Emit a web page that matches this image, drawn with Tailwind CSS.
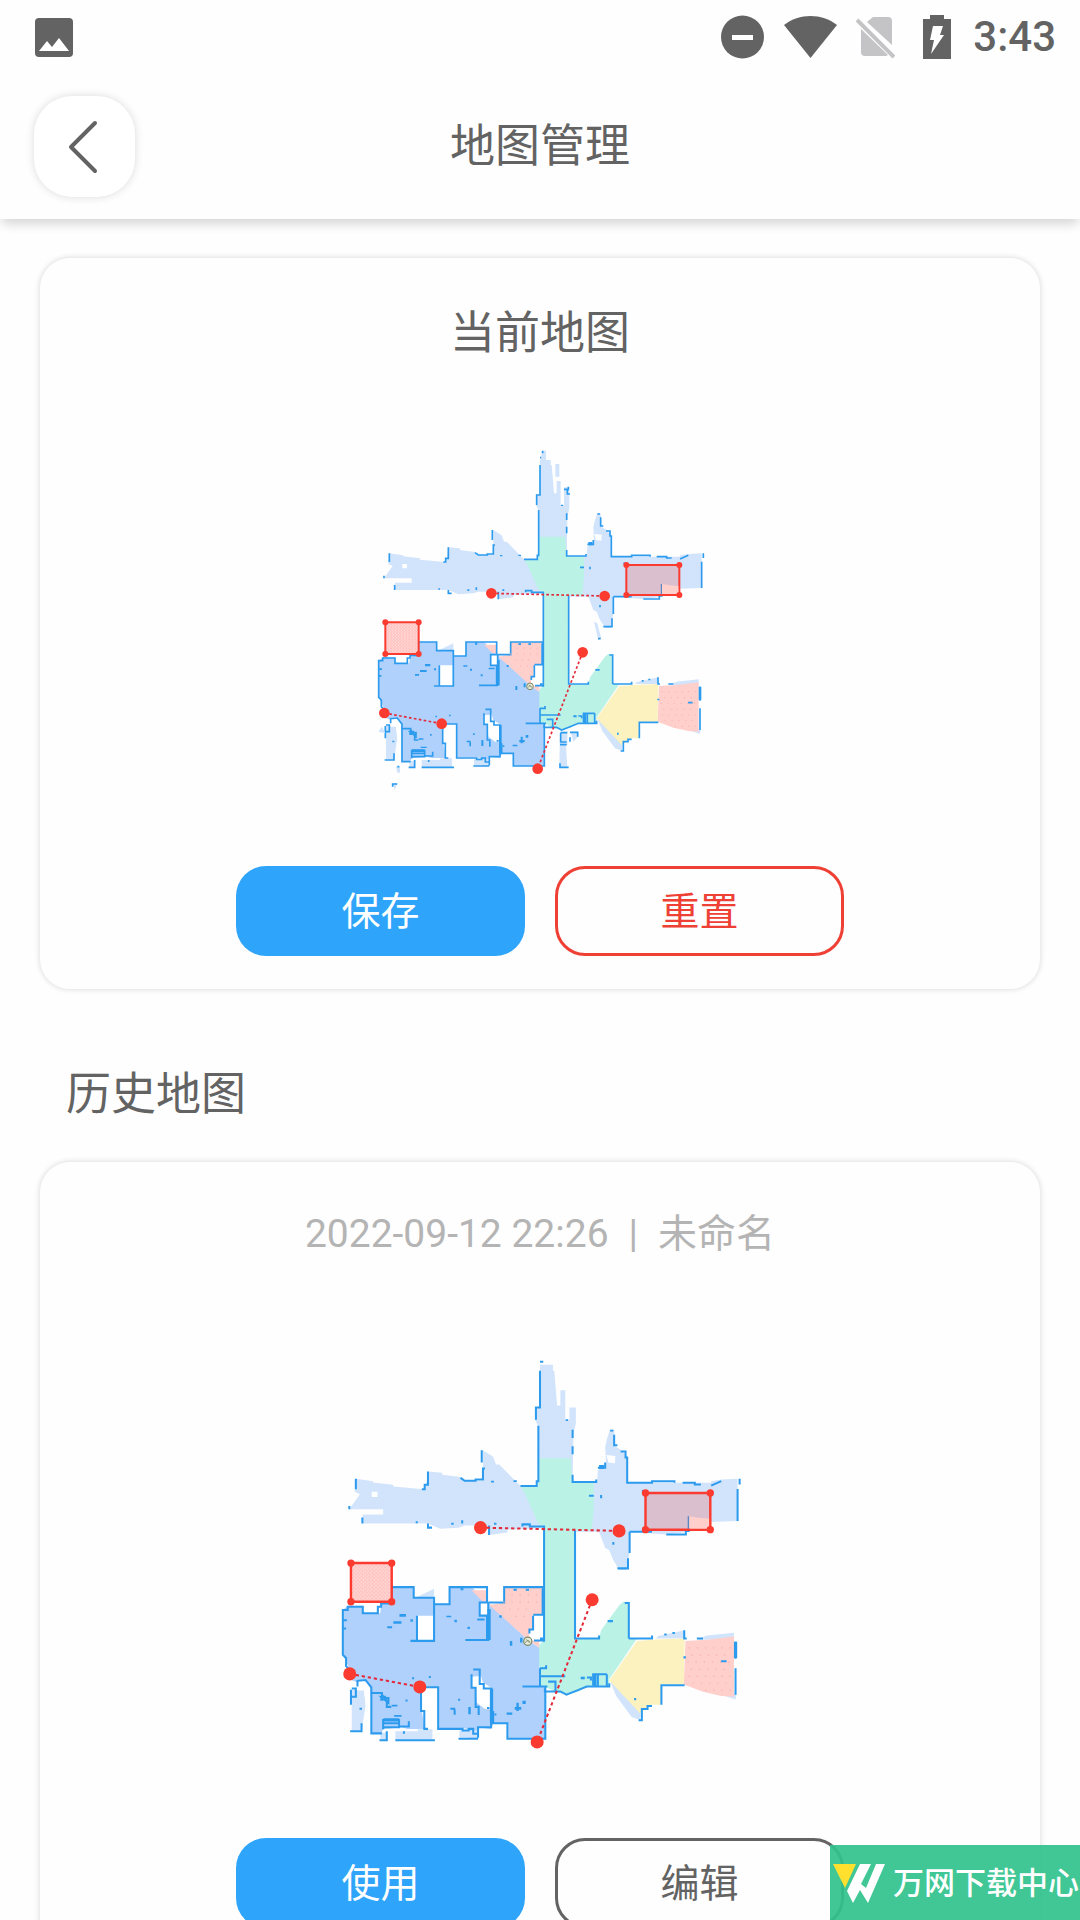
<!DOCTYPE html>
<html lang="zh-CN">

<head>
    <meta charset="UTF-8">
    <meta name="viewport" content="width=device-width, initial-scale=1.0">
    <title>地图管理</title>
    <script src="https://cdn.jsdelivr.net/npm/@tailwindcss/browser@4"></script>
</head>

<body class="relative flex h-screen flex-col overflow-hidden bg-[#fefefe] font-['Roboto','Noto_Sans_CJK_SC',sans-serif] text-[#636363]">

    <!-- Status bar -->
    <div class="flex h-[74px] shrink-0 items-center justify-between pr-6 pl-[35px]">
        <svg class="h-[39px] w-[38px]" viewBox="0 0 38 39" aria-label="图片">
            <rect width="38" height="39" rx="4" fill="#636363" />
            <path d="M4 33l8-10 5 6 7-9 10 13z" fill="#fff" />
        </svg>
        <div class="flex items-center">
            <svg class="mr-5 h-[44px] w-[43px]" viewBox="0 0 43 44" aria-label="勿扰">
                <circle cx="21.500" cy="22" r="21.500" fill="#636363" />
                <path d="M11 22.500h21" stroke="#fff" stroke-width="5" />
            </svg>
            <svg class="mr-[19px] h-[44px] w-[53px]" viewBox="0 0 53 44" aria-label="WiFi">
                <path d="M0 10C15-2 38-2 53 10L26.500 43z" fill="#636363" />
            </svg>
            <svg class="mr-7 h-[44px] w-[39px]" viewBox="0 0 39 44" aria-label="无 SIM 卡">
                <path d="M17 2h15q4 0 4 4v24L11 7zM5 14l27 26q-1 1-3 1H9q-4 0-4-4z" fill="#c4c4c6" />
                <path d="M1 5l37 37" stroke="#c4c4c6" stroke-width="4" />
            </svg>
            <svg class="mr-[22px] h-[44px] w-[28px]" viewBox="0 0 28 44" aria-label="充电中">
                <path d="M7 0h14v4h7v40H0V4h7z" fill="#636363" />
                <path d="M10 11h10l-3 9h4L8 39l3-14H7z" fill="#fff" />
            </svg>
            <span class="text-[42px] leading-[44px] font-medium">3:43</span>
        </div>
    </div>

    <!-- Header -->
    <header class="relative z-10 grid h-[145px] shrink-0 grid-cols-[1fr_auto_1fr] items-center bg-[#fefefe] px-[34px] shadow-[0_7px_10px_-2px_rgba(0,0,0,0.16)]">
        <button class="flex size-[101px] items-center justify-center rounded-[38px] bg-white pr-1 shadow-[0_0_8px_rgba(0,0,0,0.14)]" aria-label="返回">
            <svg class="h-[54px] w-[30px]" viewBox="0 0 30 54" fill="none" stroke="#636363" stroke-width="4" stroke-linecap="round" stroke-linejoin="round">
                <path d="M27 3L3 27l24 24" />
            </svg>
        </button>
        <h1 class="text-[45px] leading-[56px]">地图管理</h1>
    </header>

    <!-- Main Content -->
    <main class="min-h-0 flex-1 overflow-hidden px-10 pt-[39px]">

        <section class="flex flex-col items-center rounded-[30px] pt-12 pb-[33px] bg-[#fefefe] shadow-[0_0_5px_1px_rgba(0,0,0,0.12)]">
            <h2 class="text-[45px] leading-[56px]">当前地图</h2>
            <svg class="mt-[68px] w-[360px]" viewBox="0 0 1080 1110" role="img" aria-label="当前地图">
                <defs>
                    <pattern id="dots" width="9" height="9" patternUnits="userSpaceOnUse">
                        <rect x="1" y="1" width="3" height="3" fill="#fff" />
                        <rect x="6" y="5" width="3" height="3" fill="#fff" />
                    </pattern>
                </defs>
                <!-- Rooms and walls, shared by both maps -->
                <g id="floor">
                    <path fill="#d1e4fc" d="M88 370L130 376V379L180 385V389L255 396 262 378 265 352 300 355V360L345 366 352 375H400V300L425 316 432 335H440L492 388H535V240L528 225 530 200 540 190V90H572V105H575L578 140 582 190H590V153H602V225H612V195H628V235L622 260 620 378H680L682 350 702 330 700 292 705 270 712 250H722L724 290 740 300 752 315 755 380H960V376L985 372 1025 370V474L905 478V500L850 507 760 500V550L752 594H735L720 570 710 545 700 540 685 500H625L550 490 460 495V502L415 508 410 485H355L340 490 295 493 265 480H105V458H155V445H72L98 408 85 402Z" />
                    <path fill="#fff" d="M127 402h14v13h-14zM703 312l22 2-1 18-16-2z" />
                    <path fill="#baf2e6" d="M535 320H615L620 378H672V440L667 497H625V762H685L690 742 735 680 745 672H758V762H778L710 862V880H655L635 892 605 900 578 893 550 880H537V780L550 765V490L535 478 500 400 492 390H535Z" />
                    <path fill="#b0d1fc" d="M55 692L70 682H105L108 700H148L150 676 175 672V636H228L232 662H280V678H318V636H372L510 765 538 785V880H555V1008H462V972H425L420 985 388 980V1008H365V985L350 982H290V882H246L250 940 257 984 215 984 200 980 155 985 150 996H125V905L115 880 92 870 72 862V835L56 802Z" />
                    <path fill="#d1e4fc" d="M78 888H108L112 925 102 990 78 988ZM185 990H240V985H276V1012H185ZM342 988H388V1006H342ZM148 993H164V1012H148ZM830 756L895 742V762H825ZM712 866L727 903 765 955 786 962V940ZM930 762L950 755 1016 748V765H930ZM985 900L1022 896 1020 912ZM238 660L280 640V662Z" />
                    <path fill="#fff" d="M238 706H278V768H238ZM392 675H412V706H392ZM372 856L395 854 400 870 423 885 420 936 405 935 385 920 382 885 370 882ZM92 866H110L124 884V940L112 925 108 890H92ZM249 884H286V984H258Z" />
                    <path fill="#ffcfcb" d="M372 644H410V670H398ZM452 636H545V704H522L520 738 510 765 415 680 452 674ZM897 768L950 765 1016 757V905L985 903 940 893 893 875ZM515 768H538V785Z" />
                    <path fill="#fff" d="M524 706H547V764H514V744H523Z" />
                    <path fill="#fcf2c0" d="M778 768L835 764 895 762V768L893 875H838V925H815L785 945 710 865Z" />
                    <path fill="none" stroke="#2c9bee" stroke-width="5" d="M540 83H548M88 370V396M72 445V437M104 465V480M250 396H257V385H265V352M345 368L355 375H382V372H400V345H405M397 300V330M492 388H532V376H536V240M530 225V195H540V105M415 508V485M497 487V482H515V487H550V770M626 497V762H685V755M620 360V378H678V372M620 250V270M620 290V310M702 292M722 262V288H730M738 303H750V318H754V380H815V376H870V380M890 380H920V384H935M1030 370V384M1025 395V474M960 387L985 376M850 507H898V498H905V462M760 500V552M756 565V590H730M760 500H815M235 477H240M265 480V490H275M349 480V472M660 412H672M682 343H700V330M690 410V418M720 525V532M790 400H800" />
                    <path fill="none" stroke="#2c9bee" stroke-width="5" d="M56 750V692H68V684H105V700H142V684H150V676H175V636H230V662H280V768H222M280 678H318V636H410V674H392V706H410V766H357M413 674V768M413 674H452V636H548V704H526V706M523 706V740H514V750M525 767H550M238 706V766M56 710V802L64 810V830L72 838V858M92 880V866L112 864 126 882V995H152M78 885H88V905H76V888M76 905V925M102 970V990H74M126 896H152V908H168V920L150 905H162M152 900L164 915V930H175M155 985V962H194V980H155M155 970H194M194 978H218V965M164 990V1012H146M206 996V990M185 1012H282M248 885V940H256V984H265M248 882H290V984H350V988H365V984H376V996H388V1006M388 1000V980H420V885H402V874H392V838H376M372 850V883H382V930H392M420 935V970H460V1008H548M553 882V1008H545M425 970V940M497 880H558M388 1008H340M540 835V878M540 835H555V828M540 855H602M560 868H578V892H552V885M578 892H590L605 900 630 890 655 880H710V872M668 850H704M682 850V880H704V850M676 850V880M758 762V675H748M758 762H815V755M894 742V762H900M925 762H940M838 925V877H895M782 963H790V935H804V928H815M1020 770V812M1020 835V900M984 818H998M655 858H665V865M728 885M540 762H548" />
                    <path fill="none" stroke="#2c9bee" stroke-width="8" d="M415 690V766M548 640V704M421 885V970M672 852V878M156 962H194M152 905V915M1020 770V810" />
                    <path fill="#2c9bee" d="M345 637h7v7h-7zM475 640h8v5h-8zM505 640h8v5h-8zM165 732h12v5h-12zM180 720h20v6h-20zM195 702h16v7h-16zM222 715h6v6h-6zM310 706h12v4h-12zM330 716h6v6h-6zM386 713h18v5h-18zM362 733h6v6h-6zM440 705h6v6h-6zM466 768h6v12h-6zM491 760h6v12h-6zM267 854h5v5h-5zM226 857h5v5h-5zM339 910h5v5h-5zM320 932h12v5h-12zM328 937h5v12h-5zM364 930h6v18h-6zM387 932h5v18h-5zM410 930h6v5h-6zM478 930h16v7h-16zM482 920h6v20h-6zM497 915h8v8h-8zM458 944h14v5h-14zM428 946h5v5h-5zM176 925h14v4h-14zM210 912h5v5h-5zM182 950h18v4h-18zM706 717h13v5h-13zM771 908h5v6h-5zM845 750h6v5h-6zM865 746h6v5h-6zM892 806h6v5h-6zM712 250h8v4h-8zM685 336h12v10h-12zM603 224h6v4h-6zM420 375h7v4h-7zM475 374h8v4h-8zM322 478h6v5h-6zM427 478h6v5h-6zM56 715h10v5h-10zM56 735h8v5h-8zM97 932h6v5h-6zM640 856h10v6h-10z" />
                    <path fill="none" stroke="#f9b0ac" stroke-width="3" stroke-dasharray="3 17" d="M470 655H535M450 672H535M465 690H525M480 708H520M905 785H1010M912 803H1010M902 820H1010M910 838H1010M905 855H1010M915 872H1010M945 889H1010" />
                    <circle cx="510" cy="769" r="10" fill="#e6ecd8" stroke="#7d8768" stroke-width="3" />
                    <path d="M504 773q6-12 12-1M506 764l8 9" fill="none" stroke="#7d8768" stroke-width="2" />
                    <!-- No-go zones and virtual walls -->
                    <g fill="#fb3a30">
                        <path fill="#fb3a30" fill-opacity=".22" stroke="#fb3a30" stroke-width="6" d="M799 405H958V495H799Z" />
                        <path fill="#ffcfcb" d="M906 462L930 466 955 468V492H906Z" />
                        <path fill="#ffc4c1" d="M76 577H176V672H76Z" />
                        <path fill="url(#dots)" fill-opacity=".6" stroke="#fb3a30" stroke-width="6" d="M76 577H176V672H76Z" />
                        <g fill="none" stroke="#e32a3a" stroke-width="5" stroke-dasharray="8 7">
                            <path d="M394 490L734 498M73 849L245 881M668 667L533 1016" />
                        </g>
                        <circle cx="799" cy="405" r="9" />
                        <circle cx="958" cy="405" r="9" />
                        <circle cx="799" cy="495" r="9" />
                        <circle cx="958" cy="495" r="9" />
                        <circle cx="76" cy="577" r="9" />
                        <circle cx="176" cy="577" r="9" />
                        <circle cx="76" cy="672" r="9" />
                        <circle cx="176" cy="672" r="9" />
                        <circle cx="394" cy="490" r="16" />
                        <circle cx="734" cy="498" r="16" />
                        <circle cx="73" cy="849" r="16" />
                        <circle cx="245" cy="881" r="16" />
                        <circle cx="668" cy="667" r="16" />
                        <circle cx="533" cy="1016" r="16" />
                    </g>
                </g>
                <!-- Scan fragments only present in the live map -->
                <path fill="#d1e4fc" d="M545 62H558V90H543ZM586 102H598V140H586ZM612 172H628V195H612ZM702 575L712 580 724 626H714ZM600 905H622V945H618L622 1012H598ZM632 905H654V920L640 935ZM108 1010H120V1028H112ZM98 1060H112L104 1080ZM55 905L66 890 76 910Z" />
                <path fill="none" stroke="#2c9bee" stroke-width="5" d="M548 62V70M612 178H625V170M622 180V192H630M602 908V936H620M602 908H622M600 944H620M600 1000V1012H626M630 907H653V920M630 922V935M714 626H722M98 1070V1062H112M112 1010H118" />
            </svg>
            <div class="mt-[66px] flex gap-[30px]">
                <button class="h-[90px] w-[289px] rounded-[30px] bg-[#2ea4fb] pt-[3px] text-[39px] text-white">保存</button>
                <button class="h-[90px] w-[289px] rounded-[30px] border-3 border-[#ee4035] pt-[3px] text-[39px] text-[#ee4035]">重置</button>
            </div>
        </section>

        <h2 class="mt-[78px] mb-[39px] ml-[26px] text-[45px] leading-[56px]">历史地图</h2>

        <section class="flex flex-col items-center rounded-[30px] pt-11 pb-[33px] bg-[#fefefe] shadow-[0_0_5px_1px_rgba(0,0,0,0.12)]">
            <p class="flex gap-5 text-[39px] leading-[56px] text-[#b4b4b4]">
                <time datetime="2022-09-12T22:26">2022-09-12 22:26</time>
                <span>|</span>
                <span>未命名</span>
            </p>
            <svg class="mt-[66px] w-[440px]" viewBox="0 0 1080 1110" role="img" aria-label="历史地图">
                <use href="#floor" />
            </svg>
            <div class="mt-[58px] flex gap-[30px]">
                <button class="h-[90px] w-[289px] rounded-[30px] bg-[#2ea4fb] pt-[3px] text-[39px] text-white">使用</button>
                <button class="h-[90px] w-[289px] rounded-[30px] border-3 border-[#636363] pt-[3px] text-[39px]">编辑</button>
            </div>
        </section>
    </main>

    <!-- Download site badge -->
    <div class="absolute right-0 bottom-0 z-20 flex h-[75px] w-[250px] items-center gap-2 bg-[#30c28c]/92 pl-[3px] whitespace-nowrap text-white">
        <svg class="h-[40px] w-[52px] shrink-0" viewBox="0 0 52 40">
            <path d="M0 1h23L12 25z" fill="#ffe02e" />
            <path d="M27 1h11L28 21l5 4L43 1h9L35 40 27 27 20 40 14 28z" fill="#fff" />
        </svg>
        <span class="pt-1 text-[31px] font-medium">万网下载中心</span>
    </div>

</body>

</html>
